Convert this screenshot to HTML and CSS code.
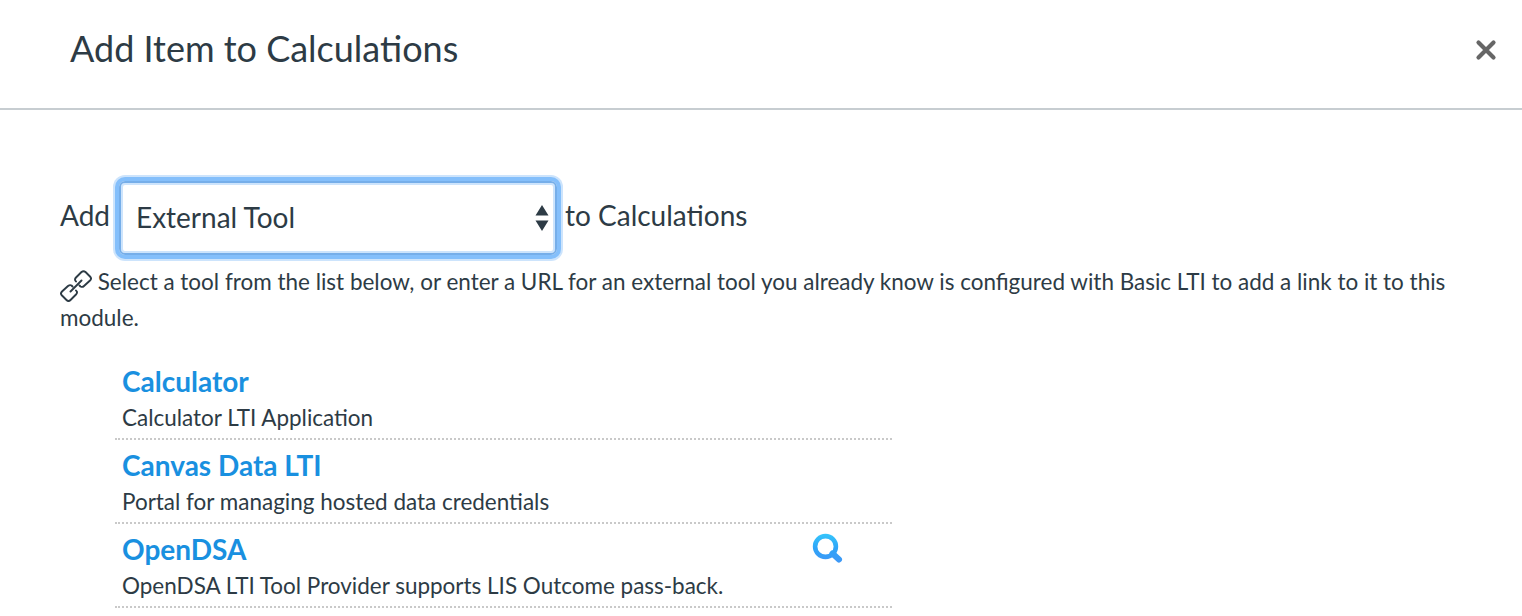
FILE: index.html
```html
<!DOCTYPE html>
<html lang="en">
<head>
<meta charset="utf-8">
<title>Add Item to Calculations</title>
<link rel="stylesheet" href="styles.css">
</head>
<body>
<header class="dialog-header">
  <h1 class="dialog-title">Add Item to Calculations</h1>
  <button class="close" aria-label="Close"><svg width="22" height="22" viewBox="0 0 22 22"><path d="M3.500 3.500L18.500 18.500M18.500 3.500L3.500 18.500" stroke="#666" stroke-width="4.200" stroke-linecap="round" fill="none"/></svg></button>
</header>
<main class="dialog-body">
  <div class="add-row">
    <span class="add-label">Add</span>
    <div class="select"><span class="select-value">External Tool</span>
      <svg class="arrows" width="14" height="28" viewBox="0 0 14 28"><path d="M7 1L13.500 11.500H.5ZM.5 16.500H13.500L7 27Z" fill="#2d3b45"/></svg>
    </div>
    <span class="add-target">to Calculations</span>
  </div>
  <p class="hint"><svg class="link-icon" width="32" height="32" viewBox="0 0 32 32" fill="none" stroke="#2d3b45" stroke-width="1.900" stroke-linecap="round" stroke-linejoin="round"><path d="M10.500 21.500L21.500 10.500M16 11.500L15.300 10.500Q14.500 9 16 7.500L21.500 2Q23.500 .5 25.500 2L30 6.500Q32 8.500 30 10.500L24 16Q22.500 17.500 20.500 16.500L19.500 15.500M12.500 16.500L11.500 15.500Q10 14.500 8 16L2 21.500Q0 23.500 2 25.500L6.500 30Q8.500 32 10.500 30L16 24.500Q17.500 23 16.800 21.500L16 20.500"/></svg> Select a tool from the list below, or enter a URL for an external tool you already know is configured with Basic LTI to add a link to it to this module.</p>
  <ul class="tools">
    <li class="tool"><a class="tool-name">Calculator</a><div class="tool-desc">Calculator LTI Application</div></li>
    <li class="tool"><a class="tool-name">Canvas Data LTI</a><div class="tool-desc">Portal for managing hosted data credentials</div></li>
    <li class="tool"><a class="tool-name">OpenDSA</a><div class="tool-desc">OpenDSA LTI Tool Provider supports LIS Outcome pass-back.</div>
      <svg class="search" width="32" height="32" viewBox="0 0 32 32"><defs><linearGradient id="lens" gradientUnits="userSpaceOnUse" x1="0" y1="1" x2="0" y2="30"><stop offset="0" stop-color="#35c5fb"/><stop offset=".5" stop-color="#2fa4f8"/><stop offset="1" stop-color="#3f97f6"/></linearGradient></defs><g fill="none" stroke="url(#lens)"><circle cx="13.500" cy="13.500" r="10.400" stroke-width="4.600"/><path d="M20.500 20.500L27 26.500" stroke-width="6" stroke-linecap="round"/></g></svg></li>
  </ul>
</main>
</body>
</html>
```
FILE: styles.css
```css
* { box-sizing: border-box; }
body { margin: 0; height: 616px; overflow: hidden; background: #fff; color: #2d3b45; font-family: Lato, sans-serif; }
.dialog-header { height: 110px; padding: 0 25px 8px 70px; display: flex; align-items: center; justify-content: space-between; border-bottom: 2px solid #c7cdd1; }
.dialog-title { margin: -4px 0 0; font-size: 36px; font-weight: 400; line-height: 44px; }
.close { display: flex; padding: 0; border: 0; background: none; }
.dialog-body { padding: 70px 60px 0; }
.add-row { display: flex; align-items: center; height: 76px; font-size: 28px; }
.add-label { width: 59px; padding-bottom: 6px; }
.add-target { padding-bottom: 6px; }
.select { width: 438px; height: 74px; margin-right: 8px; padding: 0 6px 0 15px; display: flex; align-items: center; justify-content: space-between; border: 2px solid #76aee9; border-radius: 6px; box-shadow: inset 0 0 0 2px #cde4fc, 0 0 0 4px #84bffb, 0 0 0 6px #cde4fc; }
.select-value { padding-bottom: 2px; }
.hint { margin: 8px 0 0; font-size: 22.470px; line-height: 36px; }
.link-icon { margin: -8px 0; vertical-align: -4px; }
.tools { list-style: none; width: 777px; margin: 20px 0 0 55px; padding: 0; }
.tool { position: relative; height: 84px; padding: 7px 7px 0; border-bottom: 2px dotted #c9c9c9; }
.tool-name { display: block; font-size: 28px; font-weight: 700; line-height: 36px; color: #1990e0; }
.tool-desc { padding-top: 1px; font-size: 22.480px; line-height: 36px; }
.search { position: absolute; left: 697px; top: 9px; }
```
